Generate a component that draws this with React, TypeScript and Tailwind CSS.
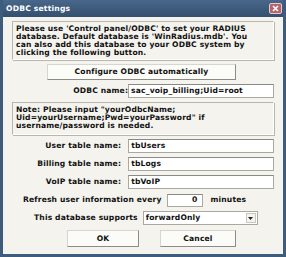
import React from "react";

const font = { fontFamily: '"DejaVu Sans", Verdana, sans-serif' };

const Field = ({ label, value, labelPad }: { label: string; value: string; labelPad: string }) => (
  <div className="flex items-center h-[14px]">
    <div className={`w-[117px] text-right ${labelPad}`}>{label}</div>
    <div className="ml-auto w-[147px] h-[14px] bg-white border border-[#a9a9a0] border-t-[#8a8a84] flex items-center px-[2px] overflow-hidden whitespace-nowrap">
      {value}
    </div>
  </div>
);

const Button = ({ children, className }: { children: React.ReactNode; className: string }) => (
  <button
    className={`h-[16px] bg-[#fbfbf8] border border-[#d6d6d0] border-r-[#8c8c86] border-b-[#8c8c86] flex items-center justify-center ${className}`}
  >
    {children}
  </button>
);

export default function App() {
  return (
    <div
      className="w-[286px] h-[257px] bg-[#3e5c7c] flex flex-col px-[3px] pb-[3px] text-[7.6px] font-bold text-[#111] leading-[8px] tracking-[0.15px] overflow-hidden"
      style={font}
    >
      {/* TITLE BAR */}
      <div className="h-[17px] flex items-center justify-between pl-[3px] pr-[1px] bg-gradient-to-b from-[#48678a] to-[#34506f]">
        <span className="text-white text-[7.6px] tracking-[0.2px]">ODBC settings</span>
        <div className="w-[13px] h-[11px] bg-[#b3646e] border border-[#e6c8cc] rounded-[2px] flex items-center justify-center">
          <svg width="7" height="7" viewBox="0 0 7 7">
            <path d="M1 1L6 6M6 1L1 6" stroke="white" strokeWidth="1.6" />
          </svg>
        </div>
      </div>

      {/* BODY */}
      <div className="flex-1 bg-[#f4f3ee] px-[9px] pt-[4px] flex flex-col">
        <div className="h-[39px] border border-[#b8b7ad] border-r-[#fff] border-b-[#fff] shadow-[1px_1px_0_#b8b7ad] px-[3px] pt-[3px] leading-[8px] whitespace-nowrap">
          <div>Please use 'Control panel/ODBC' to set your RADIUS</div>
          <div>database. Default database is 'WinRadius.mdb'. You</div>
          <div>can also add this database to your ODBC system by</div>
          <div>clicking the following button.</div>
        </div>

        <Button className="mt-[4px] ml-[35px] w-[189px]">Configure ODBC automatically</Button>

        <div className="mt-[4px]">
          <Field label="ODBC name:" value="sac_voip_billing;Uid=root" labelPad="pr-[0px]" />
        </div>

        <div className="mt-[4px] h-[33px] border border-[#b8b7ad] border-r-[#fff] border-b-[#fff] shadow-[1px_1px_0_#b8b7ad] px-[3px] pt-[3px] leading-[8px] whitespace-nowrap">
          <div>Note: Please input "yourOdbcName;</div>
          <div>Uid=yourUsername;Pwd=yourPassword" if</div>
          <div>username/password is needed.</div>
        </div>

        <div className="mt-[4px] flex flex-col gap-[4px]">
          <Field label="User table name:" value="tbUsers" labelPad="pr-[7px]" />
          <Field label="Billing table name:" value="tbLogs" labelPad="pr-[7px]" />
          <Field label="VoIP table name:" value="tbVoIP" labelPad="pr-[7px]" />
        </div>

        <div className="mt-[4px] flex items-center h-[14px]">
          <span className="ml-[11px]">Refresh user information every</span>
          <div className="ml-[5px] w-[36px] h-[13px] bg-white border border-[#a9a9a0] border-t-[#8a8a84] flex items-center justify-end pr-[4px]">
            0
          </div>
          <span className="ml-[8px]">minutes</span>
        </div>

        <div className="mt-[4px] flex items-center h-[14px]">
          <span className="ml-[22px]">This database supports</span>
          <div className="ml-[5px] w-[115px] h-[14px] bg-white border border-[#a9a9a0] flex items-center pl-[2px] pr-[1px]">
            <span className="flex-1">forwardOnly</span>
            <div className="w-[10px] h-[10px] bg-[#f4f3ee] border border-[#c8c8c0] flex items-center justify-center">
              <svg width="5" height="3" viewBox="0 0 5 3">
                <path d="M0 0H5L2.5 3Z" fill="#222" />
              </svg>
            </div>
          </div>
        </div>

        <div className="mt-[5px] flex">
          <Button className="ml-[55px] w-[72px] h-[17px]">OK</Button>
          <Button className="ml-[21px] w-[76px] h-[17px]">Cancel</Button>
        </div>
      </div>
    </div>
  );
}
